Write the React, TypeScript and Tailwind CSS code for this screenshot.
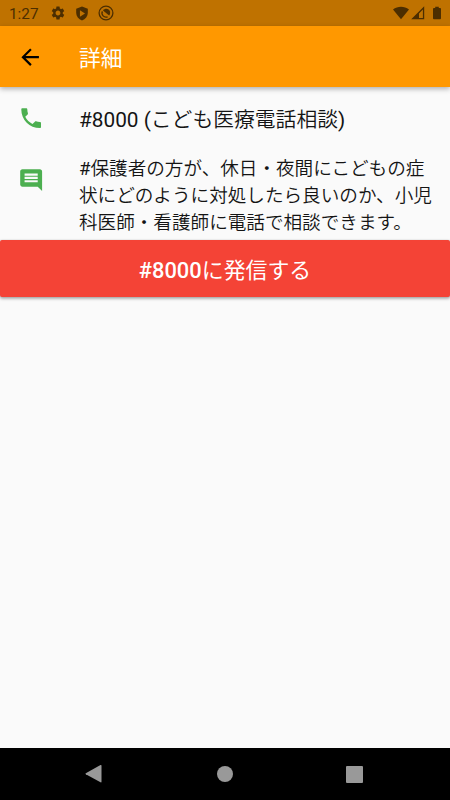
import { MdArrowBack, MdComment, MdPhone, MdSettings } from 'react-icons/md'

const description = [
  '保護者の方が、休日・夜間にこどもの症',
  '状にどのように対処したら良いのか、小児',
  '科医師・看護師に電話で相談できます。',
]

function StatusBar() {
  return (
    <div className="flex h-[26px] shrink-0 items-center bg-[#bf7200] pl-[9px] pr-2 text-[#4c2e00]">
      <span className="w-[41px] text-[15.3px] leading-[26px] pt-[1px]">1:27</span>
      <MdSettings className="h-4 w-4" />
      {/* Play Protect shield */}
      <svg viewBox="0 0 14 16" className="ml-[9px] h-[15px] w-[14px]" fill="currentColor">
        <path
          fillRule="evenodd"
          d="M7 .5 13.2 3v4.5c0 3.6-2.5 6.3-6.2 8-3.7-1.7-6.2-4.4-6.2-8V3zM4.8 4.5v7l5.4-3.5z"
        />
      </svg>
      <svg viewBox="0 0 16 16" className="ml-[9px] h-4 w-4" fill="none" stroke="currentColor">
        <circle cx="8" cy="8" r="6.9" strokeWidth="1.3" />
        <path d="M4.4 6.4A4 4 0 0 0 9.6 11.8" strokeWidth="1.3" />
        <path d="M5 5.4C7 3 11 3.4 12 6.4c.4 1.6 0 3-.9 4.2z" fill="currentColor" stroke="none" />
      </svg>
      <div className="ml-auto flex items-center">
        <svg viewBox="0 0 16 14" className="h-[14px] w-4" fill="currentColor">
          <path d="M0 3.5C4.7-.3 11.3-.3 16 3.5L8 13.3z" />
        </svg>
        <svg viewBox="0 0 14 14" className="ml-[2px] h-[14px] w-[14px]" fill="currentColor">
          <path fillRule="evenodd" d="M13.2.3v13H.2zM11.9 3.6 8 7.6v4.5h3.9z" />
        </svg>
        <svg viewBox="0 0 9 14" className="ml-2 mr-[1px] h-[14px] w-[8px]" fill="currentColor">
          <path d="M2.5 0h4v1.5H8q1 0 1 1V13q0 1-1 1H1q-1 0-1-1V2.5q0-1 1-1h1.5z" />
        </svg>
      </div>
    </div>
  )
}

function NavigationBar() {
  return (
    <div className="mt-auto flex h-[52px] items-center justify-between bg-black pl-[85px] pr-[87px] text-[#999]">
      <svg viewBox="0 0 17 18" className="h-[18px] w-[17px]" fill="currentColor">
        <path d="M.8 8.3 15.5.1q1-.3 1 .7v15.9q0 1-1 .6L.8 9.3q-.6-.5 0-1z" />
      </svg>
      <div className="ml-[2px] h-4 w-4 rounded-full bg-[#999]" />
      <div className="h-[17px] w-[17px] rounded-[1px] bg-[#999]" />
    </div>
  )
}

export default function App() {
  return (
    <div className="flex h-[800px] w-[450px] flex-col overflow-hidden bg-[#fafafa] font-[Roboto,'Noto_Sans_CJK_JP',sans-serif] text-[#141414]">
      <StatusBar />

      <header className="flex h-[61px] shrink-0 items-center bg-[#ff9800] pl-[17px] shadow-[0_2px_5px_rgba(0,0,0,0.3)]">
        <MdArrowBack className="mt-[1px] h-[26.3px] w-[26.3px] text-black" />
        <h1 className="ml-[35.7px] pt-[4px] text-[21.7px] leading-[30px] font-normal text-white">詳細</h1>
      </header>

      <main>
        <div className="flex h-[61px] items-center pl-[17.5px]">
          <MdPhone className="mt-[1px] h-[26.3px] w-[26.3px] text-[#4caf50]" />
          <p className="ml-[35.2px] whitespace-nowrap pt-[4px] text-[20.8px] leading-[30px] font-[350]">
            <span className="font-normal">#8000 (</span>
            こども医療電話相談
            <span className="font-normal">)</span>
          </p>
        </div>

        <div className="flex h-[92px] pl-[17.5px] pt-[7.5px]">
          <MdComment className="mt-[11px] h-[26.3px] w-[26.3px] text-[#4caf50]" />
          <div className="ml-[35.2px] whitespace-nowrap text-[18.6px] leading-[27.3px] font-[350]">
            {description.map((line, i) => (
              <p key={line}>
                {i === 0 && <span className="font-normal">#</span>}
                {line}
              </p>
            ))}
          </div>
        </div>

        <button className="flex h-[57px] w-full items-center justify-center rounded-[2px] bg-[#f44336] pt-[5px] text-[21.9px] text-white shadow-[0_2px_3px_rgba(0,0,0,0.28),0_0_2px_rgba(0,0,0,0.2)]">
          <span className="font-medium">#8000</span>
          <span>に発信する</span>
        </button>
      </main>

      <NavigationBar />
    </div>
  )
}
